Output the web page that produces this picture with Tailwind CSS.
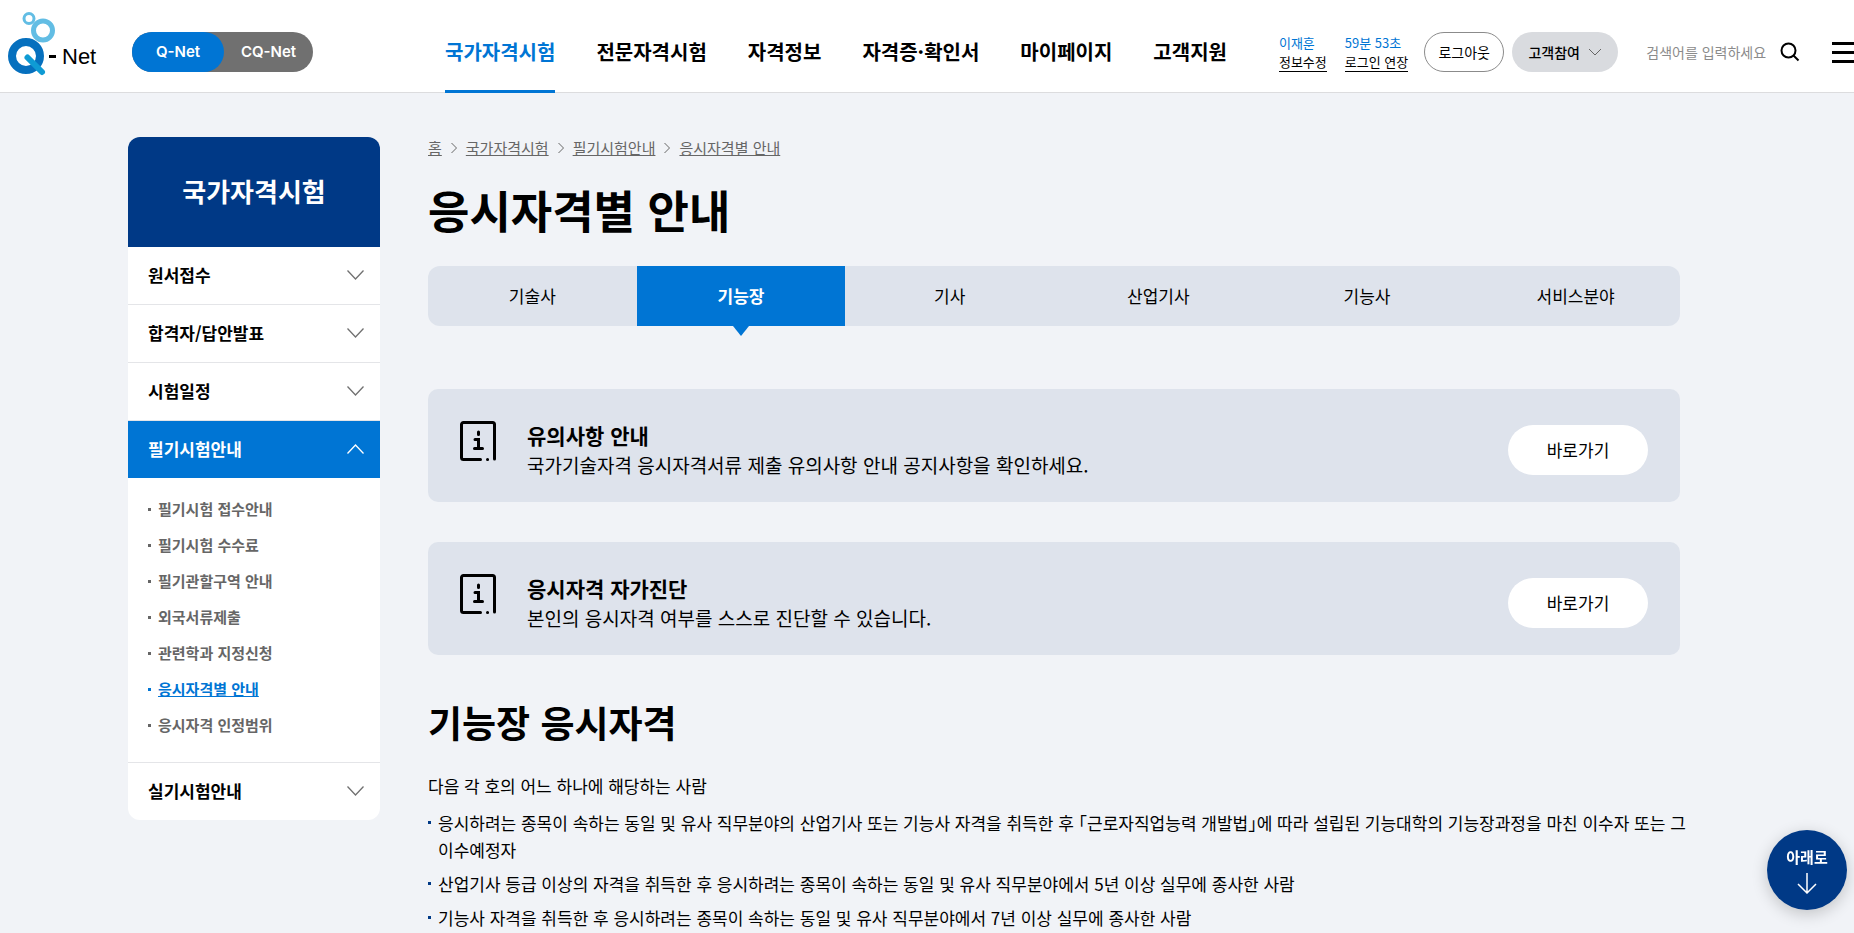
<!DOCTYPE html>
<html lang="ko">
<head>
  <meta charset="UTF-8" />
  <meta name="viewport" content="width=device-width, initial-scale=1.0" />
  <title>응시자격별 안내 | Q-Net</title>
  <script src="https://cdn.jsdelivr.net/npm/@tailwindcss/browser@4"></script>
</head>
<body class="min-h-screen overflow-hidden bg-[#f1f3f7] font-['Noto_Sans_CJK_KR',sans-serif] break-keep text-black">
  <!-- 헤더 -->
  <header class="flex h-[93px] items-center border-b border-[#dcdcde] bg-white pt-3 whitespace-nowrap">
    <a href="#" class="ml-2 flex w-[124px] shrink-0 items-center">
      <svg class="h-20 w-12 shrink-0" viewBox="8 12 48 80" fill="none">
        <circle cx="29" cy="18.500" r="5" stroke="#62bde4" stroke-width="3" />
        <circle cx="43" cy="30.500" r="9.500" stroke="#62bde4" stroke-width="5" />
        <circle cx="26" cy="56" r="14" stroke="#0670be" stroke-width="8" />
        <path d="M27.500 57.500 42 72" stroke="#0f9bd4" stroke-width="6" stroke-linecap="round" />
        <path d="M49 56.500h7" stroke="#000" stroke-width="3" />
      </svg>
      <span class="mt-2 ml-1.5 font-['Liberation_Sans',sans-serif] text-[22px]">Net</span>
    </a>
    <div class="flex h-10 shrink-0 rounded-full bg-[#707070] font-[Inter,sans-serif] text-[15px] font-semibold text-white">
      <a href="#" class="flex w-[92px] items-center justify-center rounded-full bg-[#0075d4]">Q-Net</a>
      <a href="#" class="flex w-[89px] items-center justify-center">CQ-Net</a>
    </div>
    <nav class="ml-33 flex h-full shrink-0 gap-[41px] text-xl font-bold">
      <a href="#" class="relative flex items-center text-[#0075d4] after:absolute after:inset-x-0 after:-bottom-px after:h-[3px] after:bg-[#0075d4]">국가자격시험</a>
      <a href="#" class="flex items-center">전문자격시험</a>
      <a href="#" class="flex items-center">자격정보</a>
      <a href="#" class="flex items-center">자격증·확인서</a>
      <a href="#" class="flex items-center">마이페이지</a>
      <a href="#" class="flex items-center">고객지원</a>
    </nav>
    <div class="ml-13 flex shrink-0 gap-[18px] text-[13px] leading-5">
      <div>
        <p class="text-[#0075d4]">이재훈</p>
        <a href="#" class="block border-b border-black leading-[18px]">정보수정</a>
      </div>
      <div>
        <p class="text-[#0075d4]">59분 53초</p>
        <a href="#" class="block border-b border-black leading-[18px]">로그인 연장</a>
      </div>
    </div>
    <button class="ml-4 h-10 w-20 shrink-0 rounded-full border border-[#8b8b8b] text-sm">로그아웃</button>
    <button class="ml-2 flex h-10 w-[106px] shrink-0 items-center justify-center gap-2 rounded-full bg-[#d9dbdf] text-sm font-medium">
      고객참여
      <svg class="h-2 w-3.5" viewBox="0 0 14 8" fill="none" stroke="#666"><path d="m1 1 6 6 6-6" /></svg>
    </button>
    <form class="ml-7 flex shrink-0 items-center">
      <input type="search" aria-label="검색어" placeholder="검색어를 입력하세요" class="w-[134px] text-sm placeholder:text-[#8b8b8b]" />
      <button type="button" aria-label="검색">
        <svg class="size-5" viewBox="0 0 20 20" fill="none" stroke="#000" stroke-width="2"><circle cx="8.500" cy="8.500" r="7" /><path d="m13.500 13.500 5 5" /></svg>
      </button>
    </form>
    <button aria-label="전체메뉴" class="ml-8 flex w-8 shrink-0 flex-col gap-1.5">
      <span class="h-[3px] w-full bg-black"></span>
      <span class="h-[3px] w-full bg-black"></span>
      <span class="h-[3px] w-full bg-black"></span>
    </button>
  </header>

  <div class="flex items-start gap-12 pt-11 pr-[174px] pl-32">
    <!-- 좌측 메뉴 -->
    <aside class="w-[252px] shrink-0 overflow-hidden rounded-xl bg-white">
      <h2 class="flex h-[110px] items-center justify-center bg-[#003986] pb-1 text-[26px] font-bold text-white">국가자격시험</h2>
      <ul class="text-[17px] font-bold">
        <li class="border-b border-[#e4e5e8]">
          <button class="flex h-[57px] w-full items-center justify-between pr-4 pb-0.5 pl-5">원서접수
            <svg class="h-2.5 w-[17px]" viewBox="0 0 17 10" fill="none" stroke="#707070" stroke-width="1.300"><path d="m.5.500 8 8.500 8-8.500" /></svg>
          </button>
        </li>
        <li class="border-b border-[#e4e5e8]">
          <button class="flex h-[57px] w-full items-center justify-between pr-4 pb-0.5 pl-5">합격자/답안발표
            <svg class="h-2.5 w-[17px]" viewBox="0 0 17 10" fill="none" stroke="#707070" stroke-width="1.300"><path d="m.5.500 8 8.500 8-8.500" /></svg>
          </button>
        </li>
        <li class="border-b border-[#e4e5e8]">
          <button class="flex h-[57px] w-full items-center justify-between pr-4 pb-0.5 pl-5">시험일정
            <svg class="h-2.5 w-[17px]" viewBox="0 0 17 10" fill="none" stroke="#707070" stroke-width="1.300"><path d="m.5.500 8 8.500 8-8.500" /></svg>
          </button>
        </li>
        <li class="border-b border-[#e4e5e8]">
          <button class="flex h-[57px] w-full items-center justify-between bg-[#0075d4] pr-4 pb-0.5 pl-5 text-white">필기시험안내
            <svg class="h-2.5 w-[17px]" viewBox="0 0 17 10" fill="none" stroke="#fff" stroke-width="1.300"><path d="m.5 9.500 8-8.500 8 8.500" /></svg>
          </button>
          <ul class="pt-[13px] pb-[19px] pl-5 text-[15px] leading-9 text-[#666]">
            <li class="flex items-center gap-[7px]"><span class="size-[3px] bg-current"></span><a href="#">필기시험 접수안내</a></li>
            <li class="flex items-center gap-[7px]"><span class="size-[3px] bg-current"></span><a href="#">필기시험 수수료</a></li>
            <li class="flex items-center gap-[7px]"><span class="size-[3px] bg-current"></span><a href="#">필기관할구역 안내</a></li>
            <li class="flex items-center gap-[7px]"><span class="size-[3px] bg-current"></span><a href="#">외국서류제출</a></li>
            <li class="flex items-center gap-[7px]"><span class="size-[3px] bg-current"></span><a href="#">관련학과 지정신청</a></li>
            <li class="flex items-center gap-[7px] text-[#0075d4]"><span class="size-[3px] bg-current"></span><a href="#" class="underline">응시자격별 안내</a></li>
            <li class="flex items-center gap-[7px]"><span class="size-[3px] bg-current"></span><a href="#">응시자격 인정범위</a></li>
          </ul>
        </li>
        <li>
          <button class="flex h-[57px] w-full items-center justify-between pr-4 pb-0.5 pl-5">실기시험안내
            <svg class="h-2.5 w-[17px]" viewBox="0 0 17 10" fill="none" stroke="#707070" stroke-width="1.300"><path d="m.5.500 8 8.500 8-8.500" /></svg>
          </button>
        </li>
      </ul>
    </aside>

    <!-- 본문 -->
    <main class="min-w-0 flex-1">
      <nav aria-label="현재 위치" class="flex items-center gap-[9px] text-[15px] leading-[22px] text-[#666]">
        <a href="#" class="underline">홈</a>
        <svg class="h-3 w-1.5" viewBox="0 0 6 12" fill="none" stroke="#666"><path d="m.5 1 5 5-5 5" /></svg>
        <a href="#" class="underline">국가자격시험</a>
        <svg class="h-3 w-1.5" viewBox="0 0 6 12" fill="none" stroke="#666"><path d="m.5 1 5 5-5 5" /></svg>
        <a href="#" class="underline">필기시험안내</a>
        <svg class="h-3 w-1.5" viewBox="0 0 6 12" fill="none" stroke="#666"><path d="m.5 1 5 5-5 5" /></svg>
        <a href="#" class="underline">응시자격별 안내</a>
      </nav>
      <h1 class="mt-5 text-[45px] leading-[62px] font-bold">응시자격별 안내</h1>

      <div class="mt-[25px] grid h-15 grid-cols-6 rounded-xl bg-[#dee3ec] text-[17px]">
        <a href="#" class="flex items-center justify-center">기술사</a>
        <a href="#" class="relative flex items-center justify-center bg-[#0075d4] font-bold text-white">기능장
          <svg class="absolute top-full h-2.5 w-4" viewBox="0 0 16 10" fill="#0075d4"><path d="M0 0h16L8 10z" /></svg>
        </a>
        <a href="#" class="flex items-center justify-center">기사</a>
        <a href="#" class="flex items-center justify-center">산업기사</a>
        <a href="#" class="flex items-center justify-center">기능사</a>
        <a href="#" class="flex items-center justify-center">서비스분야</a>
      </div>

      <section class="mt-[63px] flex h-[113px] items-center rounded-[10px] bg-[#dee3ec] px-8 pt-2">
        <svg class="mt-6 h-10 w-9 self-start" viewBox="0 0 36 40" fill="none" stroke="#000" stroke-width="3" stroke-linecap="round"><path d="M34.500 38V3.500a2 2 0 0 0-2-2h-29a2 2 0 0 0-2 2v33a2 2 0 0 0 2 2H20.500M27.500 38.500h.1" /><path d="M18.500 11v2.500M15 18.500h3.500V27M14.500 27.500h8" /></svg>
        <div class="ml-[31px] flex-1">
          <h3 class="text-[21px] leading-[30px] font-bold">유의사항 안내</h3>
          <p class="text-[19px] leading-[30px]">국가기술자격 응시자격서류 제출 유의사항 안내 공지사항을 확인하세요.</p>
        </div>
        <a href="#" class="flex h-[50px] w-[140px] items-center justify-center rounded-full bg-white text-[17px]">바로가기</a>
      </section>
      <section class="mt-10 flex h-[113px] items-center rounded-[10px] bg-[#dee3ec] px-8 pt-2">
        <svg class="mt-6 h-10 w-9 self-start" viewBox="0 0 36 40" fill="none" stroke="#000" stroke-width="3" stroke-linecap="round"><path d="M34.500 38V3.500a2 2 0 0 0-2-2h-29a2 2 0 0 0-2 2v33a2 2 0 0 0 2 2H20.500M27.500 38.500h.1" /><path d="M18.500 11v2.500M15 18.500h3.500V27M14.500 27.500h8" /></svg>
        <div class="ml-[31px] flex-1">
          <h3 class="text-[21px] leading-[30px] font-bold">응시자격 자가진단</h3>
          <p class="text-[19px] leading-[30px]">본인의 응시자격 여부를 스스로 진단할 수 있습니다.</p>
        </div>
        <a href="#" class="flex h-[50px] w-[140px] items-center justify-center rounded-full bg-white text-[17px]">바로가기</a>
      </section>

      <h2 class="mt-[39px] text-[37px] leading-14 font-bold">기능장 응시자격</h2>
      <p class="mt-[22px] text-[17px] leading-[27px]">다음 각 호의 어느 하나에 해당하는 사람</p>
      <ul class="mt-2.5 -mr-4 space-y-[7px] text-[17px] leading-[27px]">
        <li class="flex gap-[7px]"><span class="mt-3 size-[3px] shrink-0 bg-[#003986]"></span><span class="[font-feature-settings:'halt']">응시하려는 종목이 속하는 동일 및 유사 직무분야의 산업기사 또는 기능사 자격을 취득한 후 「근로자직업능력 개발법」에 따라 설립된 기능대학의 기능장과정을 마친 이수자 또는 그 이수예정자</span></li>
        <li class="flex gap-[7px]"><span class="mt-3 size-[3px] shrink-0 bg-[#003986]"></span><span>산업기사 등급 이상의 자격을 취득한 후 응시하려는 종목이 속하는 동일 및 유사 직무분야에서 5년 이상 실무에 종사한 사람</span></li>
        <li class="flex gap-[7px]"><span class="mt-3 size-[3px] shrink-0 bg-[#003986]"></span><span>기능사 자격을 취득한 후 응시하려는 종목이 속하는 동일 및 유사 직무분야에서 7년 이상 실무에 종사한 사람</span></li>
      </ul>
    </main>
  </div>

  <a href="#" class="fixed right-[7px] bottom-[23px] flex size-20 flex-col items-center rounded-full bg-[#003986] pt-4 text-[15px] leading-[22px] font-bold text-white shadow-[0_4px_16px_rgba(0,0,0,0.2)]">아래로
    <svg class="mt-1 h-[22px] w-5" viewBox="0 0 20 22" fill="none" stroke="#fff" stroke-width="1.500"><path d="M10 1v20M1 12l9 9 9-9" /></svg>
  </a>
</body>
</html>
